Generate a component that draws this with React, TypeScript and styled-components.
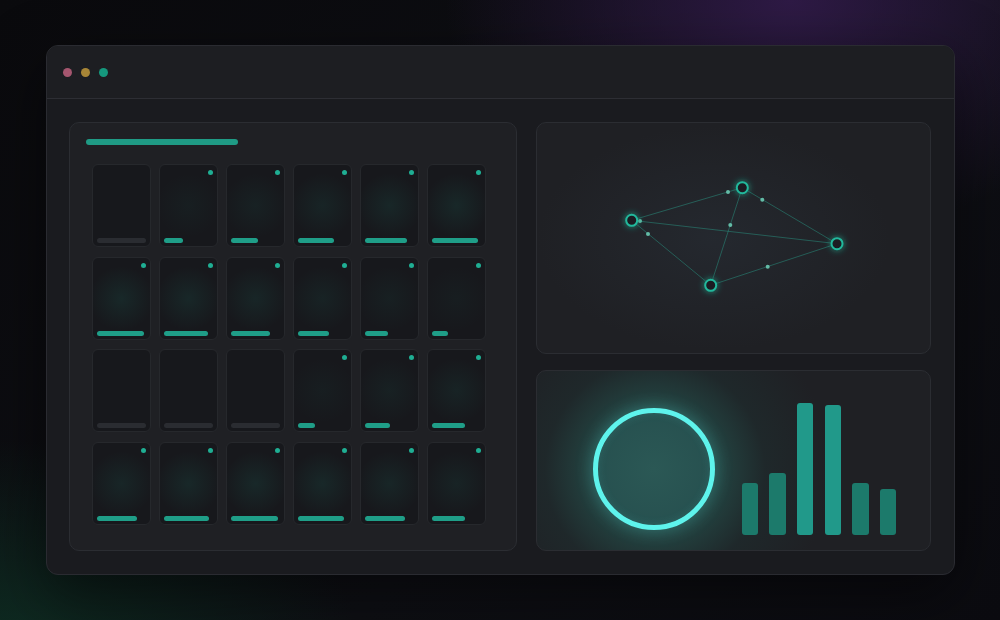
import styled, { createGlobalStyle } from "styled-components";

const GlobalStyle = createGlobalStyle`
  html, body {
    margin: 0;
    padding: 0;
    background: #0c0d11;
    font-family: "Inter", "Liberation Sans", sans-serif;
  }
  * {
    box-sizing: border-box;
  }
`;

const Page = styled.div`
  width: 1000px;
  height: 620px;
  overflow: hidden;
  padding: 45px 45px 45px 46px;
  background:
    radial-gradient(ellipse 460px 320px at 790px 0px, rgba(52, 28, 78, 0.85), transparent 75%),
    radial-gradient(ellipse 480px 280px at 0px 650px, rgba(14, 50, 37, 0.85), transparent 75%),
    linear-gradient(135deg, #0a0a0d 0%, #0e0f14 60%, #0b0b10 100%);
`;

const Window = styled.div`
  width: 909px;
  height: 530px;
  display: flex;
  flex-direction: column;
  border: 1px solid #2a2b31;
  border-radius: 12px;
  background: #1a1b1f;
  box-shadow: 0 20px 60px rgba(0, 0, 0, 0.5);
  overflow: hidden;
`;

const TitleBar = styled.div`
  height: 53px;
  flex-shrink: 0;
  display: flex;
  align-items: center;
  gap: 9px;
  padding-left: 16px;
  background: #1d1e22;
  border-bottom: 1px solid #2d2e34;
`;

const Light = styled.span<{ $color: string }>`
  width: 9px;
  height: 9px;
  border-radius: 50%;
  background: ${({ $color }) => $color};
`;

const Body = styled.div`
  flex: 1;
  display: grid;
  grid-template-columns: 448px 395px;
  gap: 19px;
  padding: 23px 23px 23px 22px;
`;

const Panel = styled.div`
  border: 1px solid #2b2d32;
  border-radius: 10px;
  background: #1f2024;
`;

const GridPanel = styled(Panel)`
  display: flex;
  flex-direction: column;
  padding: 16px;
`;

const Heading = styled.div`
  width: 152px;
  height: 6px;
  border-radius: 3px;
  background: #1f9b85;
`;

const CardGrid = styled.div`
  margin: 19px 0 0 6px;
  display: grid;
  grid-template-columns: repeat(6, 59px);
  grid-auto-rows: 83px;
  column-gap: 8px;
  row-gap: 9.5px;
`;

const Card = styled.div<{ $glow: number }>`
  display: flex;
  flex-direction: column;
  padding: 5px 4px 3px;
  border: 1px solid #26282c;
  border-radius: 6px;
  background:
    radial-gradient(circle at 50% 50%, rgba(31, 150, 128, ${({ $glow }) => $glow}) 0, transparent 65%),
    #17181c;
`;

const Dot = styled.span`
  align-self: flex-end;
  width: 5px;
  height: 5px;
  border-radius: 50%;
  background: #1fae93;
`;

const Meter = styled.div<{ $on: boolean }>`
  margin-top: auto;
  height: 5px;
  border-radius: 2.5px;
  background: ${({ $on }) => ($on ? "#1f9e88" : "#2a2c31")};
`;

const Side = styled.div`
  display: grid;
  grid-template-rows: 232px 181px;
  gap: 16px;
`;

const GraphPanel = styled(Panel)`
  background:
    radial-gradient(ellipse 220px 140px at 45% 50%, rgba(40, 46, 54, 0.6), transparent 80%),
    #1f2024;
  overflow: hidden;
`;

const Graph = styled.svg`
  display: block;
  width: 100%;
  height: 100%;
`;

const ChartPanel = styled(Panel)`
  display: flex;
  align-items: flex-end;
  padding: 0 0 15px 56px;
  overflow: hidden;
  background:
    radial-gradient(circle at 118px 99px, rgba(48, 130, 118, 0.6) 0, rgba(40, 112, 102, 0.42) 66px, rgba(30, 72, 68, 0.2) 110px, transparent 175px),
    #1f2024;
`;

const Ring = styled.div`
  width: 122px;
  height: 122px;
  margin-bottom: 5px;
  flex-shrink: 0;
  border: 5px solid #5ef3ec;
  border-radius: 50%;
  background: radial-gradient(circle, #2b5855 0, #275150 70%, #23484a 100%);
  box-shadow:
    0 0 18px rgba(94, 243, 236, 0.3),
    inset 0 0 10px rgba(94, 243, 236, 0.12);
`;

const Bars = styled.div`
  margin-left: 26.5px;
  display: flex;
  align-items: flex-end;
  gap: 11.2px;
`;

const Bar = styled.div<{ $tall: boolean }>`
  width: 16.5px;
  border-radius: 3px;
  background: ${({ $tall }) => ($tall ? "#21998a" : "#1c7a6b")};
`;

// bar width in px; 0 = idle card
const METERS = [
  [0, 19, 27, 36, 42, 46],
  [47, 44, 39, 31, 23, 16],
  [0, 0, 0, 17, 25, 33],
  [40, 45, 47, 46, 40, 33],
];

const NODES = [
  { x: 94.7, y: 97.3 },
  { x: 205.3, y: 64.7 },
  { x: 300, y: 120.7 },
  { x: 173.7, y: 162.3 },
];

const EDGES = [
  [0, 1],
  [0, 2],
  [0, 3],
  [1, 3],
  [1, 2],
  [3, 2],
];

const PULSES = [
  { x: 191, y: 69 },
  { x: 103, y: 98 },
  { x: 111, y: 111 },
  { x: 193.3, y: 102 },
  { x: 225.3, y: 76.7 },
  { x: 230.7, y: 143.7 },
];

const BARS = [52, 62, 132.5, 130.3, 52, 46.3];

export default function App() {
  return (
    <>
      <GlobalStyle />
      <Page>
        <Window>
          <TitleBar>
            <Light $color="#a5566f" />
            <Light $color="#a88637" />
            <Light $color="#15987d" />
          </TitleBar>
          <Body>
            <GridPanel>
              <Heading />
              <CardGrid>
                {METERS.flat().map((w, i) => (
                  <Card key={i} $glow={w ? (w / 47) * 0.13 : 0}>
                    {w > 0 && <Dot />}
                    <Meter
                      $on={w > 0}
                      style={w ? { width: `${w}px` } : undefined}
                    />
                  </Card>
                ))}
              </CardGrid>
            </GridPanel>

            <Side>
              <GraphPanel>
                <Graph viewBox="0 0 393 230">
                  <defs>
                    <filter id="nodeGlow" x="-100%" y="-100%" width="300%" height="300%">
                      <feGaussianBlur stdDeviation="3" result="b" />
                      <feMerge>
                        <feMergeNode in="b" />
                        <feMergeNode in="SourceGraphic" />
                      </feMerge>
                    </filter>
                  </defs>
                  {EDGES.map(([a, b], i) => (
                    <line
                      key={i}
                      x1={NODES[a].x}
                      y1={NODES[a].y}
                      x2={NODES[b].x}
                      y2={NODES[b].y}
                      stroke="#2a9683"
                      strokeOpacity={0.5}
                      strokeWidth={1}
                    />
                  ))}
                  {PULSES.map((p, i) => (
                    <circle key={i} cx={p.x} cy={p.y} r={2} fill="#63bba6" />
                  ))}
                  {NODES.map((n, i) => (
                    <circle
                      key={i}
                      cx={n.x}
                      cy={n.y}
                      r={5.5}
                      fill="#1a1c20"
                      stroke="#22b89c"
                      strokeWidth={2}
                      filter="url(#nodeGlow)"
                    />
                  ))}
                </Graph>
              </GraphPanel>

              <ChartPanel>
                <Ring />
                <Bars>
                  {BARS.map((h, i) => (
                    <Bar key={i} $tall={h > 100} style={{ height: `${h}px` }} />
                  ))}
                </Bars>
              </ChartPanel>
            </Side>
          </Body>
        </Window>
      </Page>
    </>
  );
}
